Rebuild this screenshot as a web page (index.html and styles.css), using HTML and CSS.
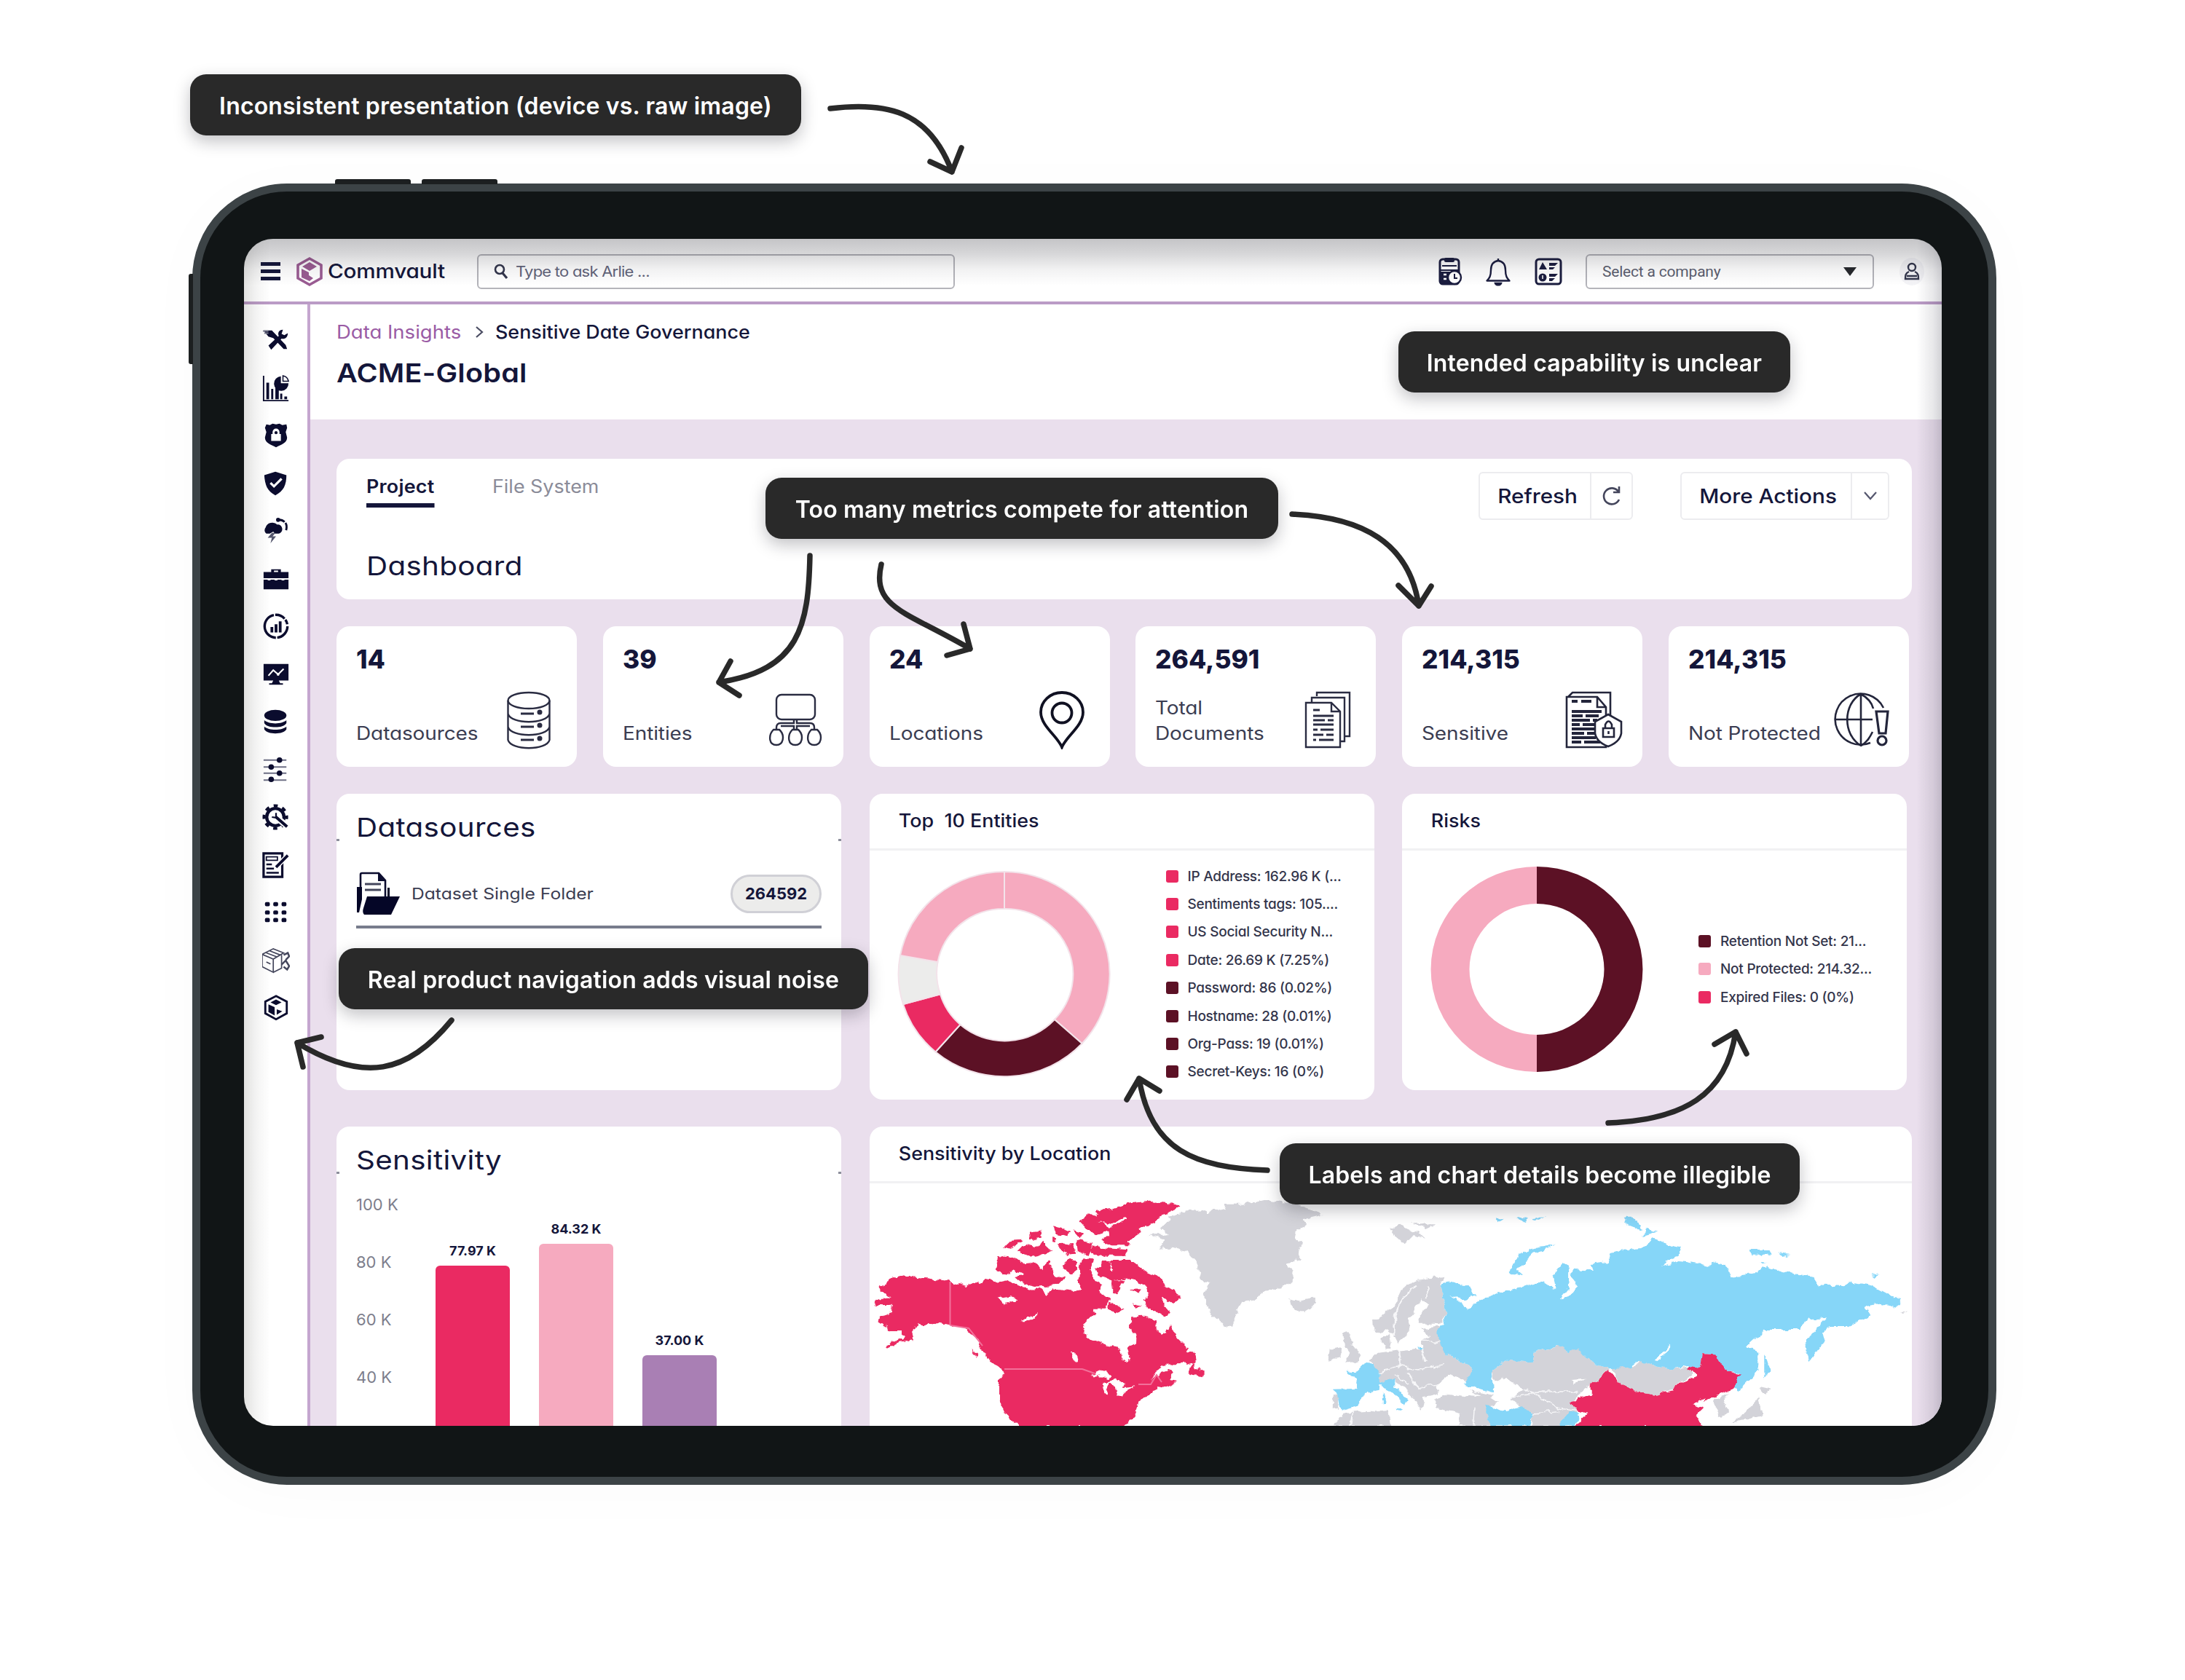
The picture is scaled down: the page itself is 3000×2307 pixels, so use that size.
FILE: index.html
```html
<!DOCTYPE html>
<html lang="en">
<head>
    <meta charset="UTF-8">
    <meta name="viewport" content="width=device-width, initial-scale=1.0">
    <title>Commvault - Sensitive Data Governance</title>
    <link rel="stylesheet" href="styles.css">
</head>
<body>
    <div class="tablet">
        <span class="hw-btn top-a"></span>
        <span class="hw-btn top-b"></span>
        <span class="hw-btn side"></span>

        <div class="screen">
            <header class="topbar">
                <div class="burger"><i></i><i></i><i></i></div>
                <div class="brand">
                    <svg width="38" height="42" viewBox="0 0 38 42">
                        <path d="M19 3 L35 12 V30 L19 39 L3 30 V12 Z" fill="none" stroke="#9b5c93" stroke-width="3.6"/>
                        <path d="M19 8 L29 14 L19 20 L9 14 Z M8 17 L18 22 V26 L24 30 L19 34 L8 29 Z" fill="#9b5c93"/>
                    </svg>
                    <span>Commvault</span>
                </div>
                <div class="search">
                    <svg width="20" height="22" viewBox="0 0 20 22" fill="none" stroke="#33364c"><circle cx="8" cy="8" r="6" stroke-width="2.6"/><path d="M12 13 L18 20" stroke-width="3.2"/></svg>
                    <span>Type to ask Arlie ...</span>
                </div>
                <div class="tools">
                    <svg width="34" height="40" viewBox="0 0 34 40">
                        <rect x="3" y="3" width="26" height="34" rx="4" fill="none" stroke="#1b1d3f" stroke-width="3"/>
                        <rect x="9" y="1" width="14" height="6" rx="2" fill="#1b1d3f"/>
                        <path d="M6 12 H26 M3 18 H29" stroke="#1b1d3f" stroke-width="2"/>
                        <path d="M4 20 H17 V36 H4 Z" fill="#1b1d3f"/>
                        <path d="M8 24 h4 M8 30 h4" stroke="#fff" stroke-width="2.5"/>
                        <circle cx="23" cy="28" r="9" fill="#fff" stroke="#1b1d3f" stroke-width="2.4"/>
                        <path d="M23 23 V29 H27" fill="none" stroke="#1b1d3f" stroke-width="2"/>
                    </svg>
                    <svg width="36" height="40" viewBox="0 0 36 40" fill="none" stroke="#1b1d3f" stroke-width="2.4">
                        <path d="M18 2 V5 M18 5 C10 6 8 12 8 18 C8 26 6 29 2.500 32.500 H33.500 C30 29 28 26 28 18 C28 12 26 6 18 5 Z" stroke-linejoin="round"/>
                        <path d="M14 36 C15 39 21 39 22 36 Z" fill="#1b1d3f"/>
                    </svg>
                    <svg width="40" height="40" viewBox="0 0 40 40">
                        <rect x="3" y="3" width="34" height="34" rx="4" fill="none" stroke="#1b1d3f" stroke-width="3"/>
                        <path d="M12 7 L18 17 H7 Z M21 8 H33 L29 12 H21 Z M21 14 H29 L26 17 H21 Z M21 23 H33 L29 27 H21 Z M21 29 H29 L25 33 H21 Z" fill="#1b1d3f"/>
                        <circle cx="12" cy="28" r="5.500" fill="#1b1d3f"/>
                        <path d="M12 25 v5" stroke="#fff" stroke-width="1.500"/>
                    </svg>
                </div>
                <div class="company"><span>Select a company</span><b></b></div>
                <div class="user">
                    <svg width="22" height="26" viewBox="0 0 22 26" fill="none" stroke="#33364c" stroke-width="2.4"><circle cx="11" cy="7" r="5"/><path d="M7 13 C2 15 2 19 2 23 H20 C20 19 20 15 15 13 M4 19 H18"/></svg>
                </div>
            </header>

            <div class="body">
                <nav class="sidebar">
                    <!-- tools -->
                    <svg viewBox="0 0 40 40"><path d="M2 6 H14 L34 27 L36 33 L31 33 L16 17 L9 15 Z" fill="#0b0c2e"/><path d="M30 5 C24 5 22 10 24 14 L9 28 L13 34 L28 18 C33 19 37 16 37 10 L32 13 L28 11 Z" fill="#0b0c2e"/><path d="M1 7 h8 M3 10 h6" stroke="#77798d" stroke-width="2"/></svg>
                    <!-- charts -->
                    <svg viewBox="0 0 40 40"><path d="M2 2 V38 H38" fill="none" stroke="#0b0c2e" stroke-width="2"/><path d="M6 12 h4 v24 h-4z M13 21 h3 v15 h-3z M19 19 h5 v17 h-5z M26 28 h3 v8 h-3z M32 32 h4 v4 h-4z" fill="#0b0c2e"/><path d="M27 3 A10.500 10.500 0 1 0 38 13 H27 Z" fill="#0b0c2e"/><path d="M30 2 A10 10 0 0 1 38 10 H30 Z" fill="none" stroke="#0b0c2e" stroke-width="1.600"/></svg>
                    <!-- lock shield -->
                    <svg viewBox="0 0 40 40"><path d="M6 4 L11 5 L15 3 L20 4 L25 3 L29 5 L35 4 L36 9 L34 15 L36 23 C36 31 28 33 20 37 C12 33 4 31 4 23 L6 15 L4 9 Z" fill="#0b0c2e"/><path d="M15 18 V15 A5 5 0 0 1 25 15 V18 H27 V28 H13 V18 Z" fill="#fff"/><circle cx="20" cy="16" r="2.200" fill="#0b0c2e"/></svg>
                    <!-- check shield -->
                    <svg viewBox="0 0 40 40"><path d="M19 3 L35 8 C35 22 31 31 19 37 C7 31 4 22 3 8 Z" fill="#0b0c2e"/><path d="M12 19 L17 24 L28 13" fill="none" stroke="#fff" stroke-width="3.400"/></svg>
                    <!-- cloud -->
                    <svg viewBox="0 0 40 40"><path d="M6 24 A6 6 0 0 1 5 15 A10 9 0 0 1 22 11 C27 10 31 17 28 21 Q26 24 22 24 H18 L16 21 L11 24 Z" fill="#0b0c2e"/><path d="M14 23 L8 30 H14 L12 38 L20 28 H15 L19 23 Z" fill="#55576e"/><path d="M22 4 C32 3 38 10 34 21" fill="none" stroke="#0b0c2e" stroke-width="3" stroke-dasharray="11 2"/><circle cx="23" cy="4" r="3" fill="#0b0c2e"/></svg>
                    <!-- briefcase -->
                    <svg viewBox="0 0 40 40"><path d="M2 10 H13 V6 H27 V10 H38 V19 H2 Z M17 10 H23 V8 H17 Z M2 21 H8 V22 H12 V21 H18 V22 H22 V21 H28 V22 H32 V21 H38 V35 H2 Z" fill="#0b0c2e" fill-rule="evenodd"/></svg>
                    <!-- analytics ring -->
                    <svg viewBox="0 0 40 40"><circle cx="20" cy="20" r="16.500" fill="none" stroke="#0b0c2e" stroke-width="3.600" stroke-dasharray="24 2 48 2 15 2 7 3"/><path d="M12 21 h4 v8 h-4z M18 17 h4 v12 h-4z M24 13 h4 v16 h-4z" fill="#0b0c2e"/></svg>
                    <!-- monitor -->
                    <svg viewBox="0 0 40 40"><path d="M2 5 H38 V29 H24 L26 33 H30 V35 H10 V33 H14 L16 29 H2 Z" fill="#0b0c2e"/><path d="M9 22 L16 14 L23 20 L31 12" fill="none" stroke="#fff" stroke-width="2.200"/><circle cx="23" cy="20" r="2" fill="#fff"/></svg>
                    <!-- database -->
                    <svg viewBox="0 0 40 40"><ellipse cx="19" cy="11" rx="16" ry="8" fill="#0b0c2e"/><path d="M3 18 C9 24 29 24 35 18 V22 C31 30 7 30 3 22 Z M3 27 C9 33 29 33 35 27 V31 C31 39 7 39 3 31 Z" fill="#0b0c2e"/></svg>
                    <!-- sliders -->
                    <svg viewBox="0 0 40 40"><path d="M2 6 H35 M2 16 H35 M2 25 H35 M2 35 H35" stroke="#6d6f85" stroke-width="2.200"/><g fill="#0b0c2e"><circle cx="25" cy="6" r="4"/><circle cx="13" cy="16" r="4"/><circle cx="25" cy="25" r="4"/><circle cx="13" cy="34" r="4"/></g></svg>
                    <!-- gear -->
                    <svg viewBox="0 0 40 40"><circle cx="19" cy="20" r="12.500" fill="none" stroke="#0b0c2e" stroke-width="4.600"/><circle cx="19" cy="20" r="16.500" fill="none" stroke="#0b0c2e" stroke-width="4" stroke-dasharray="6 6.960" stroke-dashoffset="3"/><path d="M20 20 L37 34" stroke="#fff" stroke-width="9"/><path d="M20 20 L36 34" stroke="#0b0c2e" stroke-width="4.200"/><path d="M14 20 L20 21 L20 14" fill="none" stroke="#0b0c2e" stroke-width="2.400"/></svg>
                    <!-- form -->
                    <svg viewBox="0 0 40 40"><path d="M2 3 H29 V37 H2 Z" fill="none" stroke="#0b0c2e" stroke-width="3.400"/><path d="M6 8 H22 V13 H6 Z" fill="none" stroke="#0b0c2e" stroke-width="1.800"/><path d="M6 19 H14 M6 25 H17 M6 31 H24" stroke="#0b0c2e" stroke-width="2.600"/><path d="M20 23 L37 6" stroke="#fff" stroke-width="7"/><path d="M20 23 L37 6" stroke="#0b0c2e" stroke-width="4"/></svg>
                    <!-- dots -->
                    <svg viewBox="0 0 40 40" fill="#0b0c2e"><rect x="4" y="5" width="7" height="6" rx="2"/><rect x="16" y="5" width="7" height="6" rx="2"/><rect x="28" y="5" width="7" height="6" rx="2"/><rect x="4" y="17" width="7" height="6" rx="2"/><rect x="16" y="17" width="7" height="6" rx="2"/><rect x="28" y="17" width="7" height="6" rx="2"/><rect x="4" y="28" width="7" height="6" rx="2"/><rect x="16" y="28" width="7" height="6" rx="2"/><rect x="28" y="28" width="7" height="6" rx="2"/></svg>
                    <!-- package -->
                    <svg viewBox="0 0 40 40" fill="none" stroke="#44465c" stroke-width="1.800"><path d="M0 11 L16 3 L31 9 L16 18 Z M0 11 V29 L16 37 V18 M16 37 L28 31 V12 M6 9 L22 15 M11 6 L26 12 M6 22 L12 25"/><path d="M31 12 L37 9 L39 14 L34 19 M28 26 L34 20 L39 28 L36 33 L31 29" stroke-width="2.600"/></svg>
                    <!-- hex cube -->
                    <svg viewBox="0 0 40 40"><path d="M20 3 L35.500 11 V28 L20 36.500 L4.500 28 V11 Z" fill="none" stroke="#0b0c2e" stroke-width="3"/><path d="M20 8 L28 12 L20 16 L12 12 Z M9 15 L18 19 V31 L9 26 Z M21 22 L29 25 L21 30 Z" fill="#0b0c2e"/></svg>
                </nav>

                <main>
                    <div class="page-head">
                        <div class="crumbs"><span class="link">Data Insights</span><svg width="12" height="18" viewBox="0 0 12 18" fill="none" stroke="#4b4d63" stroke-width="2.200"><path d="M2 2 L10 9 L2 16"/></svg><span class="here">Sensitive Date Governance</span></div>
                        <h1>ACME-Global</h1>
                    </div>

                    <div class="content">
                        <section class="card toolbar">
                            <div>
                                <div class="tabs"><span class="tab active">Project</span><span class="tab">File System</span></div>
                                <h2>Dashboard</h2>
                            </div>
                            <div class="buttons">
                                <div class="split refresh"><span>Refresh</span><i><svg width="28" height="30" viewBox="0 0 28 30" fill="none" stroke="#44465c" stroke-width="2.600"><path d="M24 20 A11 11 0 1 1 23 9 M24 2 V10 H16"/></svg></i></div>
                                <div class="split more"><span>More Actions</span><i><svg width="20" height="14" viewBox="0 0 20 14" fill="none" stroke="#55576e" stroke-width="2.200"><path d="M2 2 L10 11 L18 2"/></svg></i></div>
                            </div>
                        </section>

                        <section class="stats">
                            <div class="card stat">
                                <b>14</b>
                                <span>Datasources</span>
                                <svg class="ico-db" width="62" height="80" viewBox="0 0 62 80" fill="none" stroke="#2a2c42" stroke-width="2.400"><ellipse cx="31" cy="13" rx="28.500" ry="11"/><path d="M2.500 13 V67 C6 82 56 82 59.500 67 V13 M2.500 31 C6 46 56 46 59.500 31 M2.500 49 C6 64 56 64 59.500 49"/><path d="M20 31 H38 M20 49 H38 M20 67 H38" stroke-width="3"/><g fill="#2a2c42" stroke="none"><circle cx="46" cy="29" r="3.500"/><circle cx="46" cy="47" r="3.500"/><circle cx="46" cy="65" r="3.500"/></g></svg>
                            </div>
                            <div class="card stat">
                                <b>39</b>
                                <span>Entities</span>
                                <svg class="ico-ent" width="76" height="76" viewBox="0 0 76 76" fill="none" stroke="#2a2c42" stroke-width="2.400"><rect x="12" y="3" width="53" height="34" rx="7"/><path d="M36 38 V42 H18 Q12 42 12 48 V50 M40 38 V42 H58 Q64 42 64 48 V50 M36 50 V46 H18 M40 50 V46 H58"/><path d="M8 51 H16 C24 58 22 72 12 72 C1 72 1 58 8 51 Z M34 51 H42 C50 58 48 72 38 72 C27 72 27 58 34 51 Z M60 51 H68 C76 58 74 72 64 72 C53 72 53 58 60 51 Z"/></svg>
                            </div>
                            <div class="card stat">
                                <b>24</b>
                                <span>Locations</span>
                                <svg class="ico-pin" width="64" height="80" viewBox="0 0 64 80" fill="none" stroke="#101122" stroke-width="3.800"><path d="M32 77 C26 62 3 48 3 29 A29 27 0 0 1 61 29 C61 48 38 62 32 77 Z"/><circle cx="32" cy="30" r="13.500"/></svg>
                            </div>
                            <div class="card stat">
                                <b>264,591</b>
                                <span>Total<br>Documents</span>
                                <svg class="ico-docs" width="66" height="80" viewBox="0 0 66 80" fill="none" stroke="#2a2c42" stroke-width="2.400"><path d="M17 7 V2 H62 V62 H56 M10 15 V9 H55 V69 H50 M2 16 H37 L49 28 V77 H2 Z M37 16 V28 H49"/><path d="M12 26 H21 M12 34 H40 M12 40 H28 M32 40 H40 M12 46 H40 M12 53 H18 M22 53 H40 M12 60 H26 M30 60 H40 M12 67 H16 M20 67 H40" stroke-width="3"/></svg>
                            </div>
                            <div class="card stat">
                                <b>214,315</b>
                                <span>Sensitive</span>
                                <svg class="ico-sens" width="80" height="80" viewBox="0 0 80 80" fill="none" stroke="#23253b" stroke-width="2.600"><path d="M4 8 L10 2 H62 V34 M2 8 H44 L56 22 V77 H2 Z M44 8 V22 H56"/><path d="M9 14 H17 M22 14 H36 M9 28 H50 M9 34 H24 M28 34 H46 M9 40 H34 M38 40 H44 M9 46 H20 M24 46 H40 M9 52 H42 M9 58 H26 M30 58 H42 M9 64 H42 M9 70 H22 M26 70 H48" stroke-width="4"/><path d="M59 32 L77 42 V58 Q75 70 59 76 Q43 70 41 58 V42 Z" fill="#fff"/><path d="M52 51 H67 V63 H52 Z M55 51 V46 Q59.500 37 64 46 V51 M59.500 55 V59"/></svg>
                            </div>
                            <div class="card stat">
                                <b>214,315</b>
                                <span>Not Protected</span>
                                <svg class="ico-globe" width="78" height="76" viewBox="0 0 78 76" fill="none" stroke="#23253b" stroke-width="2.600"><path d="M68 21 A35 35 0 1 0 50 69"/><path d="M37 2 V73 M2 37 H53 M37 2 C12 16 12 58 37 73 M37 2 C46 7 52 14 54 22 M37 73 C46 68 50 60 53 54"/><path d="M58 26 H74 L71 56 H62 Z" stroke-width="3.200"/><circle cx="66" cy="66" r="6" stroke-width="3.200"/></svg>
                            </div>
                        </section>

                        <section class="row">
                            <div class="card datasources ticks">
                                <h2>Datasources</h2>
                                <div class="ds-row">
                                    <svg width="60" height="60" viewBox="0 0 60 60"><path d="M6 22 V4 Q6 2 8 2 H31 L40 12 V36" fill="none" stroke="#0b0c2e" stroke-width="2.600"/><path d="M30 2 L40 13 H30 Z" fill="#0b0c2e"/><path d="M12 17 H34 M12 25 H34" stroke="#44465c" stroke-width="3"/><path d="M1 21 H8 V38 L4 56 H1 Z M43 22 H46 V34 H43 Z M15 34 H60 L48 59 H11 Q8 56 10 50 Z" fill="#050627"/></svg>
                                    <span>Dataset Single Folder</span>
                                    <em>264592</em>
                                </div>
                            </div>

                            <div class="card panel entities">
                                <h3>Top&nbsp; 10 Entities</h3>
                                <div class="chart">
                                    <svg width="296" height="288" viewBox="-148 -144 296 288" stroke="#f3e3ea" stroke-width="2">
                                        <path d="M0 -141 A145.500 141 0 0 1 106.600 95 L68.900 62 A92.500 90 0 0 0 0 -90 Z" fill="#f6aabf"/>
                                        <path d="M106.600 95 A145.500 141 0 0 1 -94.500 106.500 L-60.600 69 A92.500 90 0 0 0 68.900 62 Z" fill="#5c1125"/>
                                        <path d="M-94.500 106.500 A145.500 141 0 0 1 -139 41 L-88 27.300 A92.500 90 0 0 0 -60.600 69 Z" fill="#ea2a62"/>
                                        <path d="M-139 41 A145.500 141 0 0 1 -143 -26 L-91.500 -17 A92.500 90 0 0 0 -88 27.300 Z" fill="#ececeb"/>
                                        <path d="M-143 -26 A145.500 141 0 0 1 0 -141 L0 -90 A92.500 90 0 0 0 -91.500 -17 Z" fill="#f6aabf"/>
                                    </svg>
                                    <ul class="legend">
                                        <li class="red">IP Address: 162.96 K (...</li>
                                        <li class="red">Sentiments tags: 105....</li>
                                        <li class="red">US Social Security N...</li>
                                        <li class="red">Date: 26.69 K (7.25%)</li>
                                        <li class="wine">Password: 86 (0.02%)</li>
                                        <li class="wine">Hostname: 28 (0.01%)</li>
                                        <li class="wine">Org-Pass: 19 (0.01%)</li>
                                        <li class="wine">Secret-Keys: 16 (0%)</li>
                                    </ul>
                                </div>
                            </div>

                            <div class="card panel risks">
                                <h3>Risks</h3>
                                <div class="chart">
                                    <svg width="296" height="288" viewBox="-148 -144 296 288">
                                        <path d="M0 -141 A145.500 141 0 0 1 0 141 L0 90 A92.500 90 0 0 0 0 -90 Z" fill="#5c1125"/>
                                        <path d="M0 141 A145.500 141 0 0 1 0 -141 L0 -90 A92.500 90 0 0 0 0 90 Z" fill="#f6aabf"/>
                                    </svg>
                                    <ul class="legend">
                                        <li class="wine">Retention Not Set: 21...</li>
                                        <li class="pink">Not Protected: 214.32...</li>
                                        <li class="red">Expired Files: 0 (0%)</li>
                                    </ul>
                                </div>
                            </div>
                        </section>

                        <section class="row last">
                            <div class="card sensitivity ticks">
                                <h2>Sensitivity</h2>
                                <div class="bars">
                                    <div class="axis"><span>100 K</span><span>80 K</span><span>60 K</span><span>40 K</span></div>
                                    <div class="bar red"><span>77.97 K</span><i style="height: 220px"></i></div>
                                    <div class="bar pink"><span>84.32 K</span><i style="height: 250px"></i></div>
                                    <div class="bar violet"><span>37.00 K</span><i style="height: 97px"></i></div>
                                </div>
                            </div>

                            <div class="card panel location">
                                <h3>Sensitivity by Location</h3>
                                <svg class="map" width="1431" height="333" viewBox="1194 1624 1431 333">
                                    <defs>
                                        <filter id="coast" x="0" y="0" width="100%" height="100%">
                                            <feTurbulence type="fractalNoise" baseFrequency="0.09" numOctaves="3" seed="4"/>
                                            <feDisplacementMap in="SourceGraphic" scale="9" xChannelSelector="R" yChannelSelector="G"/>
                                        </filter>
                                    </defs>
                                    <g filter="url(#coast)">
                                    <!-- North America and Greenland -->
                                    <g transform="translate(1179 1620) scale(.49744 .33333)">
                                        <g fill="#ea2a62">
                                            <path d="M125 388 L150 397 L185 403 L250 415 L295 435 L330 415 L345 420 L358 402 L375 425 L405 415 L435 432 L460 440 L470 458 L500 440 L520 470 L535 445 L590 458 L615 450 L605 420 L612 345 L620 322 L650 325 L640 365 L650 410 L672 430 L665 460 L690 490 L680 530 L645 530 L650 550 L622 590 L620 630 L640 655 L680 675 L715 685 L722 725 L740 747 L750 735 L742 690 L764 670 L765 640 L752 610 L752 562 L790 560 L820 580 L822 615 L838 632 L850 625 L860 595 L880 650 L900 680 L915 685 L905 705 L928 712 L930 745 L905 755 L850 758 L822 785 L806 825 L825 795 L850 780 L868 790 L855 825 L880 830 L850 855 L825 850 L800 885 L770 910 L765 965 L730 1014 L445 1014 L405 960 L388 905 L388 815 L400 800 L395 780 L360 745 L340 690 L325 650 L290 605 L245 597 L200 585 L180 600 L165 580 L145 630 L150 655 L110 665 L70 695 L75 680 L125 645 L118 618 L90 618 L55 585 L60 555 L90 540 L92 515 L50 517 L40 498 L60 485 L88 485 L50 440 L75 430 L85 405 Z"/>
                                            <path d="M385 312 L430 318 L455 345 L430 365 L405 388 L375 365 Z M440 345 L485 338 L505 370 L525 330 L540 390 L570 400 L550 432 L480 437 L445 415 L430 395 L455 390 L430 370 Z"/>
                                            <path d="M560 345 L585 320 L605 335 L605 365 L585 387 L565 365 Z M398 278 L420 245 L450 242 L435 270 L410 282 Z M438 290 L455 265 L485 275 L510 255 L535 290 L480 318 Z M472 215 L503 208 L497 243 L474 240 Z M535 190 L585 212 L580 232 L545 222 Z M545 262 L590 258 L600 302 L575 306 Z M593 205 L620 225 L608 238 Z M535 232 L545 235 L542 252 L535 250 Z M600 242 L645 255 L635 308 L605 298 Z"/>
                                            <path d="M610 168 L635 136 L660 152 L655 126 L700 116 L740 95 L800 86 L860 94 L887 112 L830 152 L800 188 L775 195 L780 218 L742 250 L750 268 L700 268 L665 248 L690 232 L688 208 L650 224 L632 205 Z"/>
                                            <path d="M638 270 L690 280 L742 286 L737 311 L670 311 L642 298 Z M656 362 L680 330 L750 330 L792 375 L832 400 L842 435 L888 478 L866 508 L835 485 L858 545 L842 563 L798 522 L782 490 L800 470 L788 435 L755 405 L700 412 L662 392 Z M700 412 L735 412 L715 470 L700 460 Z M690 500 L730 530 L712 548 L688 530 Z M752 447 L780 445 L772 470 Z M756 505 L782 515 L765 525 Z"/>
                                            <path d="M925 745 L930 770 L950 790 L950 808 L905 795 Z M312 700 L328 715 L322 725 Z"/>
                                        </g>
                                        <path d="M385 485 L420 475 L438 488 L400 512 Z M445 580 L465 562 L500 550 L470 580 Z M585 705 L595 705 L608 752 L600 750 Z M640 805 L675 780 L698 805 L690 818 L660 805 Z M678 880 L675 835 L705 818 L735 835 L730 855 L765 850 L715 888 L708 845 L690 835 L685 880 Z M815 800 L860 765 L880 770 L840 790 L830 810 Z M690 330 L695 375 L700 375 Z M660 165 L690 185 L740 150 L742 158 L692 195 Z" fill="#fff"/>
                                        <g fill="#d3d3d9">
                                            <path d="M800 225 L855 220 L835 195 L860 165 L850 150 L890 135 L910 120 L955 118 L965 135 L980 118 L1015 130 L1008 98 L1060 98 L1120 82 L1200 95 L1280 140 L1225 160 L1235 185 L1205 210 L1205 235 L1228 260 L1212 290 L1222 320 L1180 345 L1200 375 L1195 415 L1165 445 L1120 455 L1090 490 L1060 500 L1045 540 L1032 604 L1005 595 L970 545 L950 470 L970 425 L942 410 L935 345 L905 290 L865 275 L825 278 L845 245 Z"/>
                                            <path d="M1188 490 L1215 500 L1255 488 L1267 507 L1230 540 L1205 530 Z"/>
                                        </g>
                                    </g>
                                    <!-- Europe and Asia -->
                                    <g transform="translate(1799 1620) scale(.61224 .33333)">
                                        <g fill="#d3d3d9">
                                            <path d="M178 195 L200 185 L240 215 L260 240 L230 225 L212 262 L195 235 Z M225 178 L280 178 L260 195 Z"/>
                                            <path d="M142 580 L185 520 L205 440 L240 410 L300 395 L292 430 L300 500 L306 550 L290 590 L245 590 L243 560 L265 510 L250 490 L220 570 L225 620 L195 672 L185 635 L165 615 L145 625 Z"/>
                                            <path d="M160 650 L178 630 L182 690 L170 695 Z M250 612 L290 600 L290 660 L310 720 L362 770 L350 825 L310 800 L280 850 L288 880 L255 895 L248 948 L232 895 L205 850 L190 820 L155 835 L150 790 L130 745 L150 710 L205 700 L250 690 L250 660 L270 640 Z"/>
                                            <path d="M72 630 L90 622 L88 660 L115 720 L108 742 L80 752 L90 710 L78 680 Z M45 700 L70 690 L65 730 L42 740 Z M52 878 L65 885 L62 945 L52 935 Z"/>
                                            <path d="M50 1012 L75 960 L100 955 L175 945 L180 1012 Z M280 900 L310 880 L400 890 L420 915 L395 935 L405 1012 L330 1012 L340 960 L285 940 Z M350 860 L410 885 L400 900 Z"/>
                                            <path d="M408 785 L440 740 L500 750 L500 705 L560 680 L580 705 L600 690 L625 745 L670 775 L630 840 L585 910 L600 960 L560 1012 L500 1012 L500 955 L470 935 L450 900 L480 855 L430 815 L415 830 Z"/>
                                            <path d="M675 770 L730 765 L740 735 L765 765 L810 775 L850 770 L855 805 L820 840 L815 860 L772 885 L715 865 L690 830 Z"/>
                                            <path d="M905 900 L940 880 L925 915 L938 960 L918 975 Z M1010 850 L1035 860 L1015 880 Z M1005 895 L1012 970 L945 1000 L975 960 Z M0 485 L15 505 L0 525 Z M1322 545 L1338 545 L1330 553 Z"/>
                                        </g>
                                        <g fill="#86d6f8">
                                            <path d="M292 430 L310 415 L360 440 L370 475 L345 490 L310 470 L340 500 L350 530 L385 485 L400 485 L425 455 L480 440 L500 420 L520 420 L550 445 L545 390 L565 345 L580 360 L580 440 L560 488 L580 480 L600 435 L585 400 L590 365 L635 372 L630 345 L668 335 L672 300 L720 280 L750 275 L765 240 L800 262 L830 280 L825 310 L785 350 L830 330 L895 350 L905 335 L930 350 L945 395 L1005 380 L1020 355 L1060 378 L1130 395 L1140 430 L1195 435 L1205 415 L1250 425 L1295 470 L1328 490 L1310 525 L1280 505 L1245 520 L1258 555 L1205 600 L1165 600 L1150 625 L1155 660 L1118 747 L1108 690 L1120 640 L1140 605 L1160 565 L1115 575 L1095 615 L1020 615 L975 690 L1005 705 L1005 780 L960 870 L945 850 L965 795 L935 785 L905 715 L880 712 L875 770 L845 765 L810 775 L765 765 L740 737 L715 770 L670 775 L625 745 L600 695 L580 705 L558 680 L500 705 L500 750 L440 740 L408 785 L412 875 L345 840 L362 770 L310 720 L285 655 L285 620 L306 550 L300 500 Z"/>
                                            <path d="M440 375 L455 350 L465 305 L505 275 L552 262 L500 300 L465 365 L475 398 Z M700 152 L722 152 L745 205 L710 180 Z M755 200 L778 212 L745 228 Z M988 285 L1030 285 L1035 305 L990 305 Z M1048 300 L1075 305 L1060 312 Z M415 160 L435 155 L420 172 Z M460 150 L485 155 L480 175 Z M495 160 L528 152 L505 165 Z M1258 392 L1280 388 L1265 400 Z M1010 335 L1025 340 L1015 346 Z M1018 710 L1030 780 L1018 815 Z"/>
                                            <path d="M78 790 L105 785 L122 750 L158 785 L155 860 L128 870 L105 930 L68 950 L62 880 L50 860 L100 858 L105 820 Z M155 835 L190 815 L190 850 L220 905 L215 925 L180 870 L165 855 Z M163 870 L170 920 L163 922 Z M190 938 L205 940 L200 952 Z M240 682 L252 688 L245 693 Z M392 920 L430 950 L480 932 L502 960 L495 1012 L405 1012 Z M555 1012 L580 950 L605 965 L590 1012 Z"/>
                                        </g>
                                        <path d="M583 910 L630 880 L630 840 L668 780 L690 830 L715 865 L772 885 L815 865 L820 840 L865 808 L845 780 L850 765 L875 770 L880 712 L907 715 L935 785 L965 798 L945 860 L915 880 L880 910 L885 895 L855 920 L882 940 L865 970 L880 1014 L590 1014 L620 965 L600 955 Z" fill="#ea2a62"/>
                                        <path d="M805 672 L806 700 L780 742 L772 738 L795 705 Z M290 850 L310 805 L370 880 L350 892 L310 882 Z M415 830 L440 810 L450 830 L438 865 L455 940 L440 955 L420 900 Z M585 815 L618 812 L590 835 Z" fill="#fff"/>
                                        <path d="M240 430 L205 490 L190 560 L188 640 M262 440 V490 M200 700 L200 770 M155 790 L195 765 L240 780 L300 760 M250 690 L258 750 M220 790 L240 850 L290 840 M190 800 L220 840 M250 660 L290 665 M480 855 L560 940 M450 895 L520 870 L600 870 M95 955 L90 1010 M370 935 L368 1010 M560 940 L600 950 M500 960 L560 950" fill="none" stroke="#f7f7f9" stroke-width="4"/>
                                    </g>
                                    </g>
                                    <!-- state borders stay straight, outside the filter -->
                                    <path d="M1304.500 1759 V1819 M1379 1879 H1486 L1503 1885 M1563 1900 H1580 L1588 1887 L1595 1897 M1305 1819 L1330 1823 L1349 1847" fill="none" stroke="#f2709a" stroke-width="2"/>
                                </svg>
                            </div>
                        </section>
                    </div>
                </main>
            </div>
        </div>
    </div>

    <!-- review notes over the device -->
    <div class="note n1">Inconsistent presentation (device vs. raw image)</div>
    <div class="note n2">Intended capability is unclear</div>
    <div class="note n3">Too many metrics compete for attention</div>
    <div class="note n4">Real product navigation adds visual noise</div>
    <div class="note n5">Labels and chart details become illegible</div>

    <svg class="arrows" width="3000" height="2307" viewBox="0 0 3000 2307">
        <path d="M1140 149 C1215 140 1275 150 1307 236 M1277 222 L1307 236 L1320 203"/>
        <path d="M1112 763 C1110 860 1098 920 987 937 M1003 908 L987 937 L1015 955"/>
        <path d="M1210 775 C1196 835 1245 840 1332 891 M1323 857 L1332 891 L1300 900"/>
        <path d="M1774 706 C1870 710 1935 745 1948 832 M1920 804 L1948 832 L1965 805"/>
        <path d="M620 1401 C560 1474 500 1488 408 1432 M441 1424 L408 1432 L416 1465"/>
        <path d="M1740 1607 C1640 1603 1580 1580 1564 1481 M1547 1510 L1564 1481 L1592 1498"/>
        <path d="M2208 1542 C2310 1538 2370 1505 2383 1417 M2354 1434 L2383 1417 L2398 1447"/>
    </svg>
</body>
</html>
```
FILE: styles.css
```css
* {
    box-sizing: border-box;
}

body {
    position: relative;
    width: 3000px;
    height: 2307px;
    margin: 0;
    padding: 252px 0 0 264px;
    background: #fff;
    color: #14163a;
    font-family: Inter, "Open Sans", sans-serif;
    font-feature-settings: "cv11";
    overflow: hidden;
}

h1, h2, h3, ul {
    margin: 0;
    padding: 0;
}

svg {
    display: block;
    flex: none;
}

/* tablet */
.tablet {
    position: relative;
    width: 2477px;
    height: 1787px;
    padding: 65px 64px 70px 60px;
    border: 11px solid #3c4346;
    border-radius: 130px;
    background: #111516;
    box-shadow: 0 10px 90px rgba(0, 0, 0, 0.02);
}

.hw-btn {
    position: absolute;
    background: #1c1f20;
}

.top-a, .top-b {
    top: -17px;
    width: 104px;
    height: 7px;
    border-radius: 3px 3px 0 0;
}

.top-a { left: 185px; }
.top-b { left: 304px; }

.side {
    top: 113px;
    left: -16px;
    width: 6px;
    height: 124px;
    border-radius: 3px 0 0 3px;
}

.screen {
    position: relative;
    display: flex;
    flex-direction: column;
    height: 1630px;
    border-radius: 40px;
    background: #fff;
    overflow: hidden;
}

/* glass edge shading */
.screen::after {
    content: "";
    position: absolute;
    inset: 0;
    background:
        linear-gradient(rgba(30, 30, 40, 0.26), rgba(30, 30, 40, 0.18) 20px, rgba(30, 30, 40, 0.06) 42px, transparent 64px),
        linear-gradient(90deg, rgba(50, 50, 40, 0.14), rgba(50, 50, 40, 0.05) 18px, transparent 36px),
        linear-gradient(270deg, rgba(30, 30, 50, 0.2), rgba(30, 30, 50, 0.1) 12px, transparent 34px);
}

/* top bar */
.topbar {
    display: flex;
    align-items: center;
    height: 90px;
    padding: 3px 0 0 23px;
    border-bottom: 4px solid #bb9bc6;
    flex: none;
}

.burger {
    display: flex;
    flex-direction: column;
    gap: 5px;
    width: 27px;
    margin-right: 21px;
}

.burger i {
    height: 5px;
    background: #14163a;
}

.brand {
    display: flex;
    align-items: center;
    gap: 6px;
    width: 249px;
    font-size: 27px;
    font-weight: 500;
    letter-spacing: -0.2px;
}

.search {
    display: flex;
    align-items: center;
    gap: 10px;
    width: 656px;
    height: 48px;
    padding-left: 21px;
    border: 2px solid #b4b4ba;
    border-radius: 6px;
    color: #62647a;
    font-size: 20px;
    letter-spacing: -0.7px;
}

.tools {
    display: flex;
    gap: 31px;
    margin-left: 663px;
}

.company {
    display: flex;
    align-items: center;
    justify-content: space-between;
    width: 396px;
    height: 48px;
    margin-left: 31px;
    padding: 0 22px 0 21px;
    border: 2px solid #b4b4ba;
    border-radius: 6px;
    color: #5d5f70;
    font: 21px Roboto, sans-serif;
    letter-spacing: -0.2px;
}

.company b {
    border: 9px solid transparent;
    border-top: 12px solid #26282c;
    border-bottom: 0;
}

.user {
    display: flex;
    align-items: center;
    justify-content: center;
    width: 34px;
    height: 38px;
    margin-left: 35px;
    border-radius: 50%;
    background: rgba(240, 240, 244, 0.7);
}

/* the product typeface is wider than Inter */
.brand span, .search span, .crumbs .link, h1, .split span, .location h3 {
    transform: scaleX(1.1);
    transform-origin: left;
}

.crumbs .here, .tab, .panel h3 {
    transform: scaleX(1.075);
    transform-origin: left;
}

h2, .stat span, .ds-row span {
    transform: scaleX(1.12);
    transform-origin: left;
}

.body {
    display: flex;
    flex: 1;
    min-height: 0;
}

.sidebar {
    display: flex;
    flex-direction: column;
    align-items: center;
    gap: 27.5px;
    width: 91px;
    padding-top: 30px;
    border-right: 4px solid #c5a6cf;
    flex: none;
}

.sidebar svg {
    width: 38px;
    height: 38px;
}

main {
    flex: 1;
    min-width: 0;
}

.page-head {
    height: 158px;
    padding: 23px 0 0 36px;
}

.crumbs {
    display: flex;
    align-items: center;
    height: 30px;
    font-size: 25px;
}

.crumbs .link {
    width: 190px;
    color: #9a5ca5;
}

.crumbs .here {
    margin-left: 16px;
    font-weight: 500;
}

h1 {
    margin-top: 19px;
    font-size: 36px;
    line-height: 44px;
    font-weight: 600;
    letter-spacing: 0.2px;
}

h2 {
    font-size: 36px;
    line-height: 44px;
    font-weight: 400;
    letter-spacing: 0.3px;
}

.content {
    display: flex;
    flex-direction: column;
    gap: 37px;
    height: 1382px;
    padding: 54px 41px 0 36px;
    background: #eadfed;
    overflow: hidden;
}

.card {
    border-radius: 18px;
    background: #fff;
}

.toolbar {
    display: flex;
    justify-content: space-between;
    height: 193px;
    padding: 18px 31px 0 41px;
    flex: none;
}

.tabs {
    display: flex;
    gap: 86px;
}

.tab {
    height: 49px;
    color: #8b8c99;
    font-size: 25px;
    line-height: 40px;
}

.tab.active {
    border-bottom: 6px solid #14163a;
    color: #14163a;
    font-weight: 600;
    letter-spacing: 0.2px;
}

.toolbar h2 {
    margin-top: 58px;
}

.buttons {
    display: flex;
    gap: 65px;
}

.split {
    display: flex;
    align-items: center;
    height: 66px;
    border: 2px solid #ececef;
    border-radius: 6px;
    font-size: 27px;
    font-weight: 500;
}

.split span {
    padding-left: 22px;
}

.split i {
    display: flex;
    align-items: center;
    justify-content: center;
    height: 100%;
    margin-left: auto;
    border-left: 2px solid #ececef;
}

.refresh { width: 212px; }
.refresh i { width: 57px; }
.more { width: 287px; }
.more i { width: 51px; }

.stats {
    display: grid;
    grid-template-columns: repeat(6, 330px);
    gap: 35.800px;
    flex: none;
}

.stat {
    position: relative;
    display: flex;
    flex-direction: column;
    justify-content: space-between;
    height: 193px;
    padding: 24px 27px 28px 27px;
}

.stat b {
    font-size: 35px;
    line-height: 43px;
    font-weight: 800;
    transform: scaleX(1.01);
    transform-origin: left;
}

.stat span {
    width: 190px;
    color: #3b3d52;
    font-size: 25px;
    line-height: 35px;
    letter-spacing: -0.1px;
    white-space: nowrap;
}

/* stat icons sit in the lower right corner, over the label line */
.stat svg {
    position: absolute;
    right: 35px;
    bottom: 24px;
}

.stat .ico-ent { right: 28px; bottom: 26px; }
.stat .ico-pin { right: 34px; }
.stat .ico-docs { right: 32px; }
.stat .ico-sens { right: 26px; }
.stat .ico-globe { right: 25px; bottom: 26px; }

.row {
    display: grid;
    grid-template-columns: 693px 693px 693px;
    gap: 38.500px;
    align-items: start;
    flex: none;
}

.row.last {
    grid-template-columns: 693px 1431px;
}

.datasources, .sensitivity {
    position: relative;
    height: 407px;
    padding: 24px 27px 0;
}

/* small marks on both edges under the title */
.ticks::before, .ticks::after {
    content: "";
    position: absolute;
    top: 62px;
    left: 0;
    width: 4px;
    height: 3px;
    background: #8d8f9c;
}

.ticks::after {
    right: 0;
    left: auto;
}

.ds-row {
    display: flex;
    align-items: center;
    height: 92px;
    margin-top: 25px;
    border-bottom: 4px solid #777c8c;
}

.ds-row span {
    margin-left: 16px;
    color: #3b3d52;
    font-size: 22px;
}

.ds-row em {
    width: 125px;
    height: 53px;
    margin-left: auto;
    border: 3px solid #d0d0d6;
    border-radius: 27px;
    background: #ececeb;
    font-size: 22px;
    line-height: 47px;
    font-style: normal;
    font-weight: 700;
    text-align: center;
}

.entities { height: 420px; }
.risks { height: 407px; }

.panel h3 {
    height: 75px;
    padding-left: 37px;
    font-size: 25px;
    line-height: 75px;
    font-weight: 500;
    white-space: pre;
}

.panel {
    overflow: hidden;
}

.chart {
    display: flex;
    align-items: center;
    padding: 19px 0 0 37px;
    border-top: 3px solid #f1f1f3;
}

.chart .legend {
    margin-left: 74px;
}

.entities .chart {
    padding-top: 16px;
}

.risks .legend {
    margin-left: 74px;
}

.legend {
    list-style: none;
}

.legend li {
    display: flex;
    align-items: center;
    gap: 13px;
    height: 38.400px;
    color: #33354b;
    font-size: 19px;
    font-weight: 500;
    letter-spacing: -0.25px;
    white-space: nowrap;
}

.legend li::before {
    content: "";
    width: 17px;
    height: 17px;
    border-radius: 3px;
    background: #ea2a62;
}

.legend .wine::before { background: #5c1125; }
.legend .pink::before { background: #f6aabf; }

.sensitivity {
    height: 460px;
}

.bars {
    display: flex;
    align-items: flex-end;
    height: 343px;
}

.axis {
    display: flex;
    flex-direction: column;
    align-self: flex-start;
    width: 109px;
    padding-top: 2px;
    color: #7d7e8c;
    font-size: 22px;
}

.axis span {
    height: 79px;
    line-height: 28px;
    padding-top: 23px;
}

.bar {
    width: 102px;
    margin-right: 40px;
    font-size: 18px;
    font-weight: 700;
    text-align: center;
}

.bar span {
    display: block;
    line-height: 22px;
    margin-bottom: 9px;
}

.bar i {
    display: block;
    border-radius: 6px 6px 0 0;
}

.bar.red i { background: #ea2a62; }
.bar.pink i { background: #f6aabf; }
.bar.violet i { background: #a97fb4; }

.location {
    height: 460px;
}

.map {
    border-top: 3px solid #f1f1f3;
    box-sizing: content-box;
}

/* notes */
.note {
    position: absolute;
    height: 84px;
    border-radius: 22px;
    background: #292929;
    color: #fff;
    font-size: 32px;
    line-height: 87px;
    font-weight: 600;
    font-feature-settings: normal;
    letter-spacing: 0.17px;
    text-align: center;
    white-space: nowrap;
    box-shadow: 0 8px 22px rgba(20, 20, 30, 0.26);
}

.n1 { top: 102px; left: 261px; width: 839px; }
.n2 { top: 455px; left: 1920px; width: 538px; }
.n3 { top: 656px; left: 1051px; width: 704px; }
.n4 { top: 1302px; left: 465px; width: 727px; }
.n5 { top: 1570px; left: 1757px; width: 714px; }

.arrows {
    position: absolute;
    top: 0;
    left: 0;
    fill: none;
    stroke: #292929;
    stroke-width: 7.500;
    stroke-linecap: round;
    stroke-linejoin: round;
}
```
